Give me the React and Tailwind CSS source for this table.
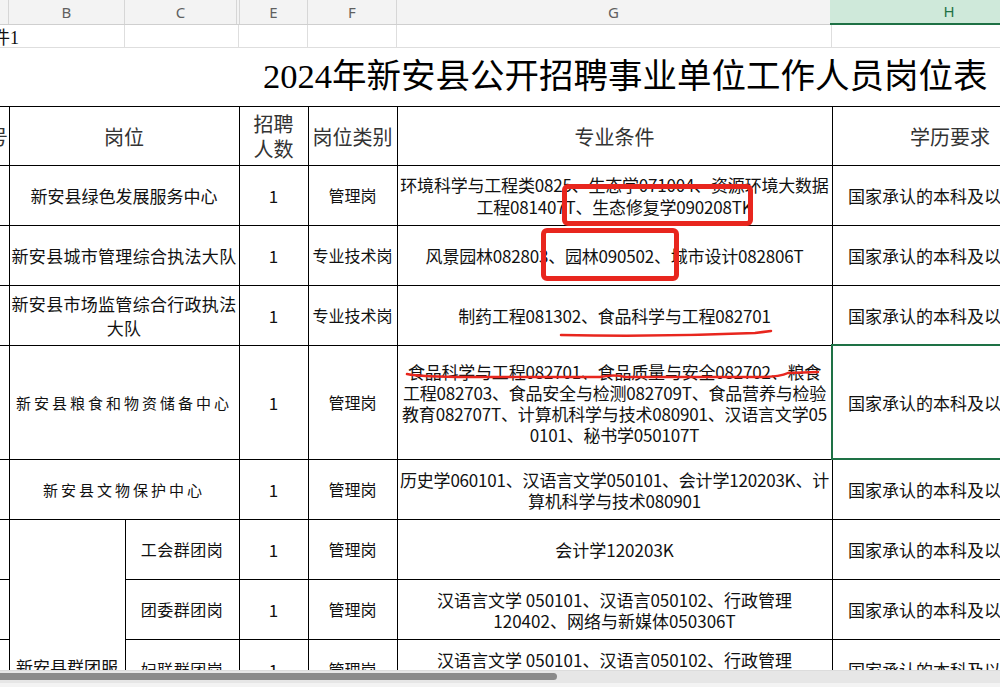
import React from 'react';

const cell = "border border-black text-center align-middle p-0";
const edge = "border-y border-r border-black p-0";
const major = "border border-black text-center align-middle p-0 whitespace-nowrap tracking-[-0.2px]";

const App = () => {
  return (
    <div className="relative w-[1000px] h-[687px] overflow-hidden bg-white font-['Noto_Sans_CJK_SC','Noto_Sans',sans-serif] text-[#111]">
      {/* column letters */}
      <div className="flex h-[25px] bg-[#f3f3f3] border-b border-[#cfcfcf] text-[15px] text-[#5f5f5f] font-['Noto_Sans','Liberation_Sans',sans-serif]">
        <div className="w-[9px] shrink-0 border-r border-[#d6d6d6]"></div>
        <div className="w-[116px] shrink-0 border-r border-[#d6d6d6] flex items-center justify-center">B</div>
        <div className="w-[112px] shrink-0 border-r border-[#d6d6d6] flex items-center justify-center">C</div>
        <div className="w-[3px] shrink-0 border-r border-[#d6d6d6]"></div>
        <div className="w-[68px] shrink-0 border-r border-[#d6d6d6] flex items-center justify-center">E</div>
        <div className="w-[89px] shrink-0 border-r border-[#d6d6d6] flex items-center justify-center">F</div>
        <div className="w-[433px] shrink-0 flex items-center justify-center">G</div>
        <div className="w-[238px] shrink-0 bg-[#cfe9da] border-b-2 border-[#1e7145] text-[#1e7145] flex items-center justify-center -mb-px">H</div>
      </div>

      <div className="h-[645px] overflow-hidden">
        {/* row 1 */}
        <div className="flex h-[23px] border-b border-[#dedede]">
          <div className="w-[125px] shrink-0 border-r border-[#dedede] overflow-hidden">
            <div className="-ml-[26px] pt-[2px] whitespace-nowrap text-[18px] leading-[23px] font-['Liberation_Serif','Noto_Sans_CJK_SC',serif]">附件1</div>
          </div>
          <div className="w-[114px] shrink-0 border-r border-[#dedede]"></div>
          <div className="w-[69px] shrink-0 border-r border-[#dedede]"></div>
          <div className="w-[89px] shrink-0 border-r border-[#dedede]"></div>
          <div className="w-[435px] shrink-0 border-r border-[#dedede]"></div>
        </div>

        {/* title */}
        <div className="h-[58px] flex items-center pl-[263px] whitespace-nowrap text-[34.5px] text-black font-['Liberation_Serif','Noto_Sans_CJK_SC',serif]">
          2024年新安县公开招聘事业单位工作人员岗位表
        </div>

        <table className="table-fixed border-collapse w-[1068px] text-[17px] leading-[21px]">
          <colgroup>
            <col className="w-[9px]" />
            <col className="w-[116px]" />
            <col className="w-[114px]" />
            <col className="w-[69px]" />
            <col className="w-[89px]" />
            <col className="w-[435px]" />
            <col className="w-[236px]" />
          </colgroup>
          <tbody>
            <tr className="h-[59px] text-[20px] text-[#333]">
              <td className={edge}>
                <div className="w-[8px] overflow-hidden">
                  <div className="-ml-[12px] whitespace-nowrap">号</div>
                </div>
              </td>
              <td colSpan={2} className={cell}>岗位</td>
              <td className={`${cell} leading-[25px]`}>招聘<br />人数</td>
              <td className={`${cell} whitespace-nowrap`}>岗位类别</td>
              <td className={cell}>专业条件</td>
              <td className={cell}>学历要求</td>
            </tr>

            <tr className="h-[60px]">
              <td className={edge}></td>
              <td colSpan={2} className={`${cell} whitespace-nowrap`}>新安县绿色发展服务中心</td>
              <td className={cell}>1</td>
              <td className={`${cell} text-[16px]`}>管理岗</td>
              <td className={`${major} leading-[22px]`}>
                环境科学与工程类0825、生态学071004、资源环境大数据<br />工程081407T、生态修复学090208TK
              </td>
              <td className={`${cell} whitespace-nowrap`}>国家承认的本科及以上学历</td>
            </tr>

            <tr className="h-[60px]">
              <td className={edge}></td>
              <td colSpan={2} className={`${cell} whitespace-nowrap tracking-[0.3px]`}>新安县城市管理综合执法大队</td>
              <td className={cell}>1</td>
              <td className={`${cell} whitespace-nowrap text-[16px]`}>专业技术岗</td>
              <td className={major}>风景园林082803、园林090502、城市设计082806T</td>
              <td className={`${cell} whitespace-nowrap`}>国家承认的本科及以上学历</td>
            </tr>

            <tr className="h-[60px]">
              <td className={edge}></td>
              <td colSpan={2} className={`${cell} whitespace-nowrap tracking-[0.3px] leading-[24px]`}>新安县市场监管综合行政执法<br />大队</td>
              <td className={cell}>1</td>
              <td className={`${cell} whitespace-nowrap text-[16px]`}>专业技术岗</td>
              <td className={major}>制药工程081302、食品科学与工程082701</td>
              <td className={`${cell} whitespace-nowrap`}>国家承认的本科及以上学历</td>
            </tr>

            <tr className="h-[114px]">
              <td className={edge}></td>
              <td colSpan={2} className={`${cell} whitespace-nowrap text-[15px] tracking-[3px]`}>新安县粮食和物资储备中心</td>
              <td className={cell}>1</td>
              <td className={`${cell} text-[16px]`}>管理岗</td>
              <td className={major}>
                食品科学与工程082701、食品质量与安全082702、粮食<br />
                工程082703、食品安全与检测082709T、食品营养与检验<br />
                教育082707T、计算机科学与技术080901、汉语言文学05<br />
                0101、秘书学050107T
              </td>
              <td className={`${cell} whitespace-nowrap`}>国家承认的本科及以上学历</td>
            </tr>

            <tr className="h-[60px]">
              <td className={edge}></td>
              <td colSpan={2} className={`${cell} whitespace-nowrap text-[15px] tracking-[3px]`}>新安县文物保护中心</td>
              <td className={cell}>1</td>
              <td className={`${cell} text-[16px]`}>管理岗</td>
              <td className={major}>
                历史学060101、汉语言文学050101、会计学120203K、计<br />算机科学与技术080901
              </td>
              <td className={`${cell} whitespace-nowrap`}>国家承认的本科及以上学历</td>
            </tr>

            <tr className="h-[60px]">
              <td className={edge}></td>
              <td rowSpan={5} className={`${cell} align-top pt-[136px] whitespace-nowrap leading-[22px]`}>新安县群团服<br />务中心</td>
              <td className={`${cell} text-[16px] tracking-[0.5px]`}>工会群团岗</td>
              <td className={cell}>1</td>
              <td className={`${cell} text-[16px]`}>管理岗</td>
              <td className={`${cell} whitespace-nowrap`}>会计学120203K</td>
              <td className={`${cell} whitespace-nowrap`}>国家承认的本科及以上学历</td>
            </tr>
            <tr className="h-[60px]">
              <td className={edge}></td>
              <td className={`${cell} text-[16px] tracking-[0.5px]`}>团委群团岗</td>
              <td className={cell}>1</td>
              <td className={`${cell} text-[16px]`}>管理岗</td>
              <td className={`${cell} whitespace-nowrap`}>汉语言文学 050101、汉语言050102、行政管理<br />120402、网络与新媒体050306T</td>
              <td className={`${cell} whitespace-nowrap`}>国家承认的本科及以上学历</td>
            </tr>
            <tr className="h-[60px]">
              <td className={edge}></td>
              <td className={`${cell} text-[16px] tracking-[0.5px]`}>妇联群团岗</td>
              <td className={cell}>1</td>
              <td className={`${cell} text-[16px]`}>管理岗</td>
              <td className={`${cell} whitespace-nowrap`}>汉语言文学 050101、汉语言050102、行政管理<br />120402、网络与新媒体050306T</td>
              <td className={`${cell} whitespace-nowrap`}>国家承认的本科及以上学历</td>
            </tr>
            <tr className="h-[60px]">
              <td className={edge}></td>
              <td className={`${cell} text-[16px]`}>科协群团岗</td>
              <td className={cell}>1</td>
              <td className={`${cell} text-[16px]`}>管理岗</td>
              <td className={`${cell} whitespace-nowrap`}>不限专业</td>
              <td className={`${cell} whitespace-nowrap`}>国家承认的本科及以上学历</td>
            </tr>
            <tr className="h-[60px]">
              <td className={edge}></td>
              <td className={`${cell} text-[16px]`}>残联群团岗</td>
              <td className={cell}>1</td>
              <td className={`${cell} text-[16px]`}>管理岗</td>
              <td className={`${cell} whitespace-nowrap`}>不限专业</td>
              <td className={`${cell} whitespace-nowrap`}>国家承认的本科及以上学历</td>
            </tr>
          </tbody>
        </table>
      </div>

      {/* horizontal scrollbar */}
      <div className="h-[17px] bg-[#f3f3f3] border-t border-[#dcdcdc]">
        <div className="h-[12px] bg-[#e6e6e6] pt-[2px]">
          <div className="w-[557px] h-[7px] bg-[#8a8a8a] rounded-r-full"></div>
        </div>
      </div>

      {/* selected cell H (row 4) */}
      <div className="absolute left-[831px] top-[344px] w-[200px] h-[116px] border-2 border-[#1e7145]"></div>

      {/* red annotations */}
      <div className="absolute left-[562px] top-[184px] w-[191px] h-[42px] border-[5px] border-[#e8261e] rounded-[6px]"></div>
      <div className="absolute left-[541px] top-[228px] w-[138px] h-[53px] border-[5px] border-[#e8261e] rounded-[6px]"></div>
      <svg className="absolute left-0 top-0 pointer-events-none" width="1000" height="687">
        <path d="M561 335 Q 660 337 755 333 L 771 331" fill="none" stroke="#e8261e" strokeWidth="2.5" strokeLinecap="round" />
        <path d="M407 374 Q 420 377 470 377 L 600 377 Q 615 374 625 377 L 760 377 Q 780 377 788 373 L 818 372" fill="none" stroke="#e8261e" strokeWidth="2.5" strokeLinecap="round" />
      </svg>
    </div>
  );
};

export default App;
